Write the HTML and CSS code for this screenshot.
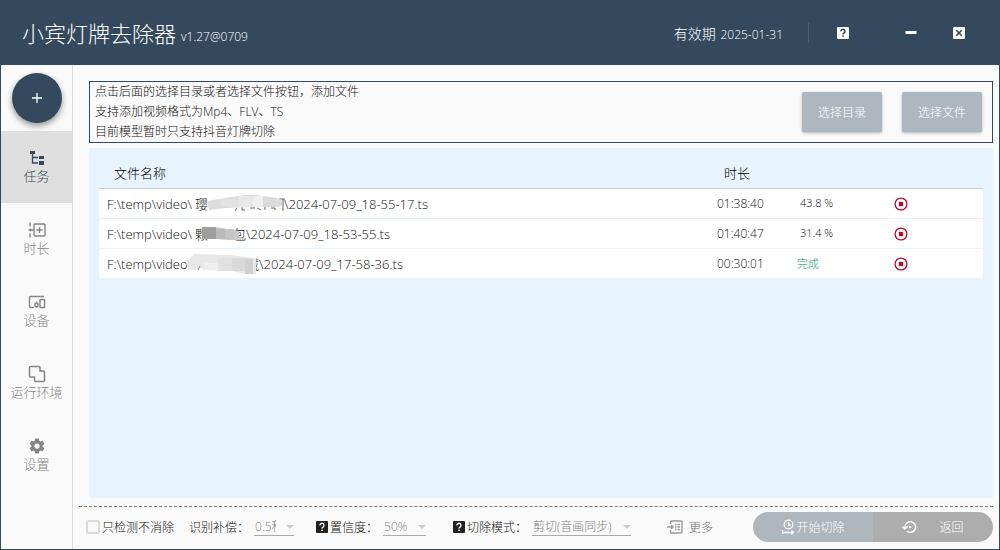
FILE: index.html
```html
<!DOCTYPE html>
<html lang="zh-CN">
<head>
<meta charset="utf-8">
<title>小宾灯牌去除器</title>
<link rel="stylesheet" href="styles.css">
</head>
<body>
<div class="window">
  <header class="titlebar">
    <h1 class="title">小宾灯牌去除器</h1>
    <span class="version">v1.27@0709</span>
    <span class="expiry">有效期 <span class="date">2025-01-31</span></span>
    <span class="divider"></span>
    <button class="tool help" aria-label="帮助"><svg width="12" height="12" viewBox="0 0 12 12"><rect width="12" height="12" rx="1" fill="#fff"/><path d="M4 4.400a2 2 0 1 1 3.200 1.500C6.400 6.500 6 6.700 6 7.600M6 8.600v1.400" fill="none" stroke="#34495e" stroke-width="1.600"/></svg></button>
    <button class="tool minimize" aria-label="最小化"><svg width="12" height="12" viewBox="0 0 12 12"><path d="M.5 5.500h11" stroke="#fff" stroke-width="3"/></svg></button>
    <button class="tool" aria-label="关闭"><svg width="12" height="12" viewBox="0 0 12 12"><rect width="12" height="12" rx="1" fill="#fff"/><path d="M3.300 3.300l5.400 5.400M8.700 3.300L3.300 8.700" stroke="#34495e" stroke-width="1.600"/></svg></button>
  </header>
  <div class="body">
    <nav class="sidebar">
      <button class="add" aria-label="添加"><svg width="12" height="12" viewBox="0 0 12 12"><path d="M6 1v10M1 6h10" stroke="#fff" stroke-width="1.300"/></svg></button>
      <button class="nav active">
        <svg width="18" height="18" viewBox="0 0 18 18"><g fill="#34495e"><rect x="2" y="2" width="5" height="3"/><rect x="11" y="7" width="5" height="3"/><rect x="11" y="12" width="5" height="4"/></g><path d="M4.500 5v9H10M4.500 8.500H10" fill="none" stroke="#34495e" stroke-width="1.300"/></svg>
        任务</button>
      <button class="nav">
        <svg width="18" height="18" viewBox="0 0 18 18" fill="none" stroke="#858585" stroke-width="1.400"><rect x="6" y="3" width="11" height="12" rx="1"/><path d="M11.500 6v6M8.500 9h6M2 1.500v4M2 12.500v4M.5 9h5M2.500 7.500v3"/></svg>
        时长</button>
      <button class="nav">
        <svg width="18" height="18" viewBox="0 0 18 18" fill="none" stroke="#858585" stroke-width="1.400"><path d="M16 3.500H2.500a1 1 0 0 0-1 1v9a1 1 0 0 0 1 1H6"/><circle cx="8.500" cy="12" r="1.700"/><path d="M8.500 8.500v2M8.500 14v1"/><rect x="12" y="6.500" width="4.500" height="8" rx=".5"/></svg>
        设备</button>
      <button class="nav">
        <svg width="18" height="18" viewBox="0 0 18 18" fill="none" stroke="#858585" stroke-width="1.500"><path d="M2.500 1.500h8.500a1 1 0 0 1 1 1V6h3.500a1 1 0 0 1 1 1v8.500a1 1 0 0 1-1 1H7.500a1 1 0 0 1-1-1V12h-4a1 1 0 0 1-1-1V2.500a1 1 0 0 1 1-1z"/></svg>
        运行环境</button>
      <button class="nav">
        <svg width="18" height="18" viewBox="0 0 24 24" fill="#858585"><path d="M19.430 12.980c.04-.32.07-.64.07-.98s-.03-.66-.07-.98l2.110-1.650c.19-.15.24-.42.12-.64l-2-3.460c-.12-.22-.39-.3-.61-.22l-2.490 1c-.52-.4-1.080-.73-1.690-.98l-.38-2.650A.49.49 0 0 0 14 2h-4c-.25 0-.46.18-.49.42l-.38 2.650c-.61.25-1.170.59-1.690.98l-2.490-1c-.23-.09-.49 0-.61.22l-2 3.460c-.13.22-.07.49.12.64l2.110 1.650c-.04.32-.07.65-.07.98s.03.66.07.98l-2.110 1.650c-.19.15-.24.42-.12.64l2 3.460c.12.22.39.3.61.22l2.490-1c.52.4 1.080.73 1.690.98l.38 2.650c.03.24.24.42.49.42h4c.25 0 .46-.18.49-.42l.38-2.650c.61-.25 1.170-.59 1.690-.98l2.490 1c.23.09.49 0 .61-.22l2-3.460c.12-.22.07-.49-.12-.64zM12 15.500a3.500 3.500 0 1 1 0-7 3.500 3.500 0 0 1 0 7z"/></svg>
        设置</button>
    </nav>
    <main class="main">
      <section class="info">
        <p class="hint">点击后面的选择目录或者选择文件按钮，添加文件<br>支持添加视频格式为Mp4、FLV、TS<br>目前模型暂时只支持抖音灯牌切除</p>
        <button class="pick">选择目录</button>
        <button class="pick">选择文件</button>
      </section>
      <section class="list">
        <table class="files">
          <thead><tr><th class="c-name">文件名称</th><th class="c-time">时长</th><th class="c-state"></th><th></th></tr></thead>
          <tbody>
            <tr><td>F:\temp\video\<span class="masked mask-a">璎<svg class="smudge" width="92" height="20" viewBox="0 0 92 20"><path d="M42 14l-2 3M47 13v3h3M55 14h5M62 14l4 2M70 13v3M76 14h4v2M84 5h6M88 5v12" stroke="#666" fill="none"/><path d="M12 7l18-3 20-3h12l20 3 5 2v5l-3 2H60l-30 1-16 2z" fill="#dcdcdc"/><path d="M26 5h18v8H26z" fill="#e2e2e2"/><path d="M44 2h14v11H44z" fill="#e8e8e8"/><path d="M58 2h10v11H58z" fill="#efefef"/><path d="M68 4h12v9H68z" fill="#dadada"/></svg></span>\2024-07-09_18-55-17.ts</td>
              <td>01:38:40</td><td class="state">43.8 %</td><td><button class="stop" aria-label="停止"><svg width="14" height="14" viewBox="0 0 14 14"><circle cx="7" cy="7" r="5.900" fill="none" stroke="#b00d2a" stroke-width="1.300"/><rect x="4.800" y="4.800" width="4.400" height="4.400" fill="#b00d2a"/></svg></button></td></tr>
            <tr><td>F:\temp\video\<span class="masked mask-b">颗<span class="tail">包</span><svg class="smudge" width="51" height="20" viewBox="0 0 51 20"><path d="M7 3h14l12 2 11 2v6l5 1v2H33l-12-1H8z" fill="#c9c9c9"/><path d="M7 3h14v12H7z" fill="#9e9e9e"/><path d="M21 5h9v10h-9z" fill="#bababa"/><path d="M30 5h9v10h-9z" fill="#c4c4c4"/></svg></span>\2024-07-09_18-53-55.ts</td>
              <td>01:40:47</td><td class="state">31.4 %</td><td><button class="stop" aria-label="停止"><svg width="14" height="14" viewBox="0 0 14 14"><circle cx="7" cy="7" r="5.900" fill="none" stroke="#b00d2a" stroke-width="1.300"/><rect x="4.800" y="4.800" width="4.400" height="4.400" fill="#b00d2a"/></svg></button></td></tr>
            <tr><td>F:\temp\video\<span class="masked mask-c"><span class="tail">藏</span><svg class="smudge wide" width="76" height="24" viewBox="0 0 76 24"><path d="M0 8L8 0l36 1 26 3v16H60l-14-3-28-1-2-2-8 2H2z" fill="#e8e8e8"/><path d="M18 9h14v7H18z" fill="#efefef"/><path d="M32 4h14v13H32z" fill="#e2e2e2"/><path d="M46 4h13v13H46z" fill="#d9d9d9"/><path d="M59 5h8v15h-8z" fill="#d0d0d0"/><path d="M14 12l-2 4" stroke="#888"/></svg></span>\2024-07-09_17-58-36.ts</td>
              <td>00:30:01</td><td class="state done">完成</td><td><button class="stop" aria-label="停止"><svg width="14" height="14" viewBox="0 0 14 14"><circle cx="7" cy="7" r="5.900" fill="none" stroke="#b00d2a" stroke-width="1.300"/><rect x="4.800" y="4.800" width="4.400" height="4.400" fill="#b00d2a"/></svg></button></td></tr>
          </tbody>
        </table>
      </section>
      <footer class="footer">
        <label class="check"><input type="checkbox">只检测不消除</label>
        <label class="field offset">识别补偿：<span class="drop"><select class="w-s"><option>0.5秒</option></select></span></label>
        <label class="field confidence"><svg class="q" width="12" height="12" viewBox="0 0 12 12"><rect width="12" height="12" rx="1" fill="#222"/><path d="M4 4.400a2 2 0 1 1 3.200 1.500C6.400 6.500 6 6.700 6 7.600M6 8.600v1.400" fill="none" stroke="#fff" stroke-width="1.400"/></svg>置信度：<span class="drop"><select class="w-m"><option>50%</option></select></span></label>
        <label class="field mode"><svg class="q" width="12" height="12" viewBox="0 0 12 12"><rect width="12" height="12" rx="1" fill="#222"/><path d="M4 4.400a2 2 0 1 1 3.200 1.500C6.400 6.500 6 6.700 6 7.600M6 8.600v1.400" fill="none" stroke="#fff" stroke-width="1.400"/></svg>切除模式：<span class="drop"><select class="w-l"><option>剪切(音画同步)</option></select></span></label>
        <button class="more"><svg width="16" height="14" viewBox="0 0 16 14" fill="none" stroke="#9a9a9a" stroke-width="1.400"><path d="M3.500 4V2a1 1 0 0 1 1-1H14a1 1 0 0 1 1 1v10a1 1 0 0 1-1 1H4.500a1 1 0 0 1-1-1v-2M0 7h6M4 5l2 2-2 2M8 4.500h1.500M10.500 4.500H13M8 7h1.500M10.500 7H13M8 9.500h1.500M10.500 9.500H13"/></svg>更多</button>
        <div class="actions">
          <button class="act start"><svg width="14" height="16" viewBox="0 0 14 16" fill="none" stroke="#fff" stroke-width="1.300"><circle cx="7.500" cy="5.500" r="4.300"/><path d="M7.500 3v3h2M1.500 11v4M1.500 13.500h11M10.500 11.500l2 2-2 2"/></svg>开始切除</button>
          <button class="act back"><svg width="15" height="14" viewBox="0 0 15 14" fill="none" stroke="#fff" stroke-width="1.400"><path d="M3 8V7a5.300 5.300 0 1 1 2 4.200M.5 6.500L3 9l2.500-2.500"/><circle cx="8.200" cy="7" r="1.200" fill="#fff" stroke="none"/></svg>返回</button>
        </div>
      </footer>
    </main>
  </div>
</div>
</body>
</html>
```
FILE: styles.css
```css
* { box-sizing: border-box; }
body {
  margin: 0;
  font-family: "Open Sans", "Noto Sans CJK SC", sans-serif;
  font-weight: 300;
  font-size: 12px;
  color: #111;
}
button, select, input { font: inherit; color: inherit; margin: 0; }
button { border: 0; padding: 0; background: none; }
svg { display: block; flex: none; }
.window {
  display: flex;
  flex-direction: column;
  min-height: 100vh;
  border: 1px solid #34495e;
  background: #fafafa;
}
.titlebar {
  display: flex;
  align-items: center;
  height: 64px;
  padding: 0 34px 0 21px;
  background: #34495e;
  color: #fff;
}
.title { margin: 0; font-size: 22px; font-weight: 300; line-height: 32px; }
.version { margin: 6px 0 0 5px; }
.expiry { margin-left: auto; font-size: 14px; }
.date { margin-left: 1px; font-size: 12px; }
.divider { width: 1px; height: 20px; margin: 0 28px 0 25px; background: #4d6075; }
.help { margin-right: 56px; }
.minimize { margin-right: 36px; }
.body { display: flex; flex: 1; }
.sidebar {
  display: flex;
  flex-direction: column;
  flex: none;
  width: 72px;
  border-right: 1px solid #dcdcdc;
}
.add {
  display: grid;
  place-items: center;
  width: 50px;
  height: 50px;
  margin: 8px auto;
  border-radius: 50%;
  background: #34495e;
  box-shadow: 0 3px 6px rgba(0, 0, 0, .4);
}
.nav {
  display: flex;
  flex-direction: column;
  align-items: center;
  justify-content: center;
  height: 72px;
  font-size: 13px;
  line-height: 18px;
  color: #858585;
}
.active { background: #dfdfdf; color: #34495e; }
.main {
  display: flex;
  flex-direction: column;
  flex: 1;
  padding: 16px 6px 7px 6px;
}
.info {
  display: flex;
  align-items: center;
  gap: 20px;
  margin-left: 10px;
  padding: 0 10px 0 5px;
  border: 1px solid #34495e;
}
.hint { flex: 1; margin: 0; line-height: 20px; }
.pick {
  width: 80px;
  height: 40px;
  border-radius: 2px;
  background: #aeb6be;
  color: #fff;
  box-shadow: 0 1px 3px rgba(0, 0, 0, .3);
}
.list { flex: 1; margin: 5px 0 8px 10px; padding: 10px; background: #e7f4fe; }
.files { width: 100%; table-layout: fixed; border-spacing: 0; }
.files th {
  height: 31px;
  padding: 0 15px 2px;
  border-bottom: 1px solid #c3d3df;
  font-size: 13px;
  font-weight: 300;
  text-align: left;
  color: #000;
}
.c-name { width: 610px; }
.c-time { width: 80px; }
.c-state { width: 100px; }
.files td {
  height: 30px;
  padding: 0 8px;
  border-bottom: 1px solid #e7f4fe;
  background: #fff;
  white-space: nowrap;
}
.files td:first-child { border-radius: 3px 0 0 3px; font-size: 13px; }
.files td:last-child { border-radius: 0 3px 3px 0; }
.files .state { padding: 0 10px 2px 11px; font-size: 11px; }
.files .done { padding-left: 8px; color: #0b9a68; }
.stop { display: block; margin-left: -3px; }
.masked { position: relative; display: inline-flex; margin-left: 3px; }
.mask-a { width: 89px; }
.mask-b { width: 51px; }
.mask-c { width: 64px; }
.tail { margin-left: auto; }
.smudge { position: absolute; left: 0; top: 0; }
.wide { left: -9px; }
.footer {
  display: flex;
  align-items: center;
  height: 36px;
  padding: 5px 0 0 7px;
  border-top: 1px dashed #777;
}
.check, .field, .more { display: flex; align-items: center; white-space: nowrap; }
.check input {
  appearance: none;
  width: 14px;
  height: 14px;
  margin-right: 2px;
  border: 2px solid #dcdcdc;
  border-radius: 2px;
}
.offset { margin-left: 15px; }
.confidence { margin-left: 22px; }
.mode { margin-left: 27px; }
.q { margin-right: 2px; }
.drop { position: relative; margin-left: 5px; color: #808080; }
.drop::after {
  content: "";
  position: absolute;
  right: 0;
  top: 7px;
  border: 4px solid transparent;
  border-top-color: #ccc;
}
.drop select {
  appearance: none;
  display: block;
  height: 18px;
  padding: 0 18px 0 1px;
  border: 0;
  border-bottom: 1px solid #aaa;
  border-radius: 0;
  background: none;
}
.w-s { width: 40px; }
.w-m { width: 43px; }
.w-l { width: 99px; }
.more { gap: 6px; margin-left: 36px; color: #707070; }
.actions { display: flex; margin-left: auto; border-radius: 15px; overflow: hidden; color: #fff; }
.act { display: flex; align-items: center; justify-content: center; width: 120px; height: 30px; }
.start { gap: 1px; background: #aeb6be; }
.back { gap: 22px; background: #adadad; }
```
